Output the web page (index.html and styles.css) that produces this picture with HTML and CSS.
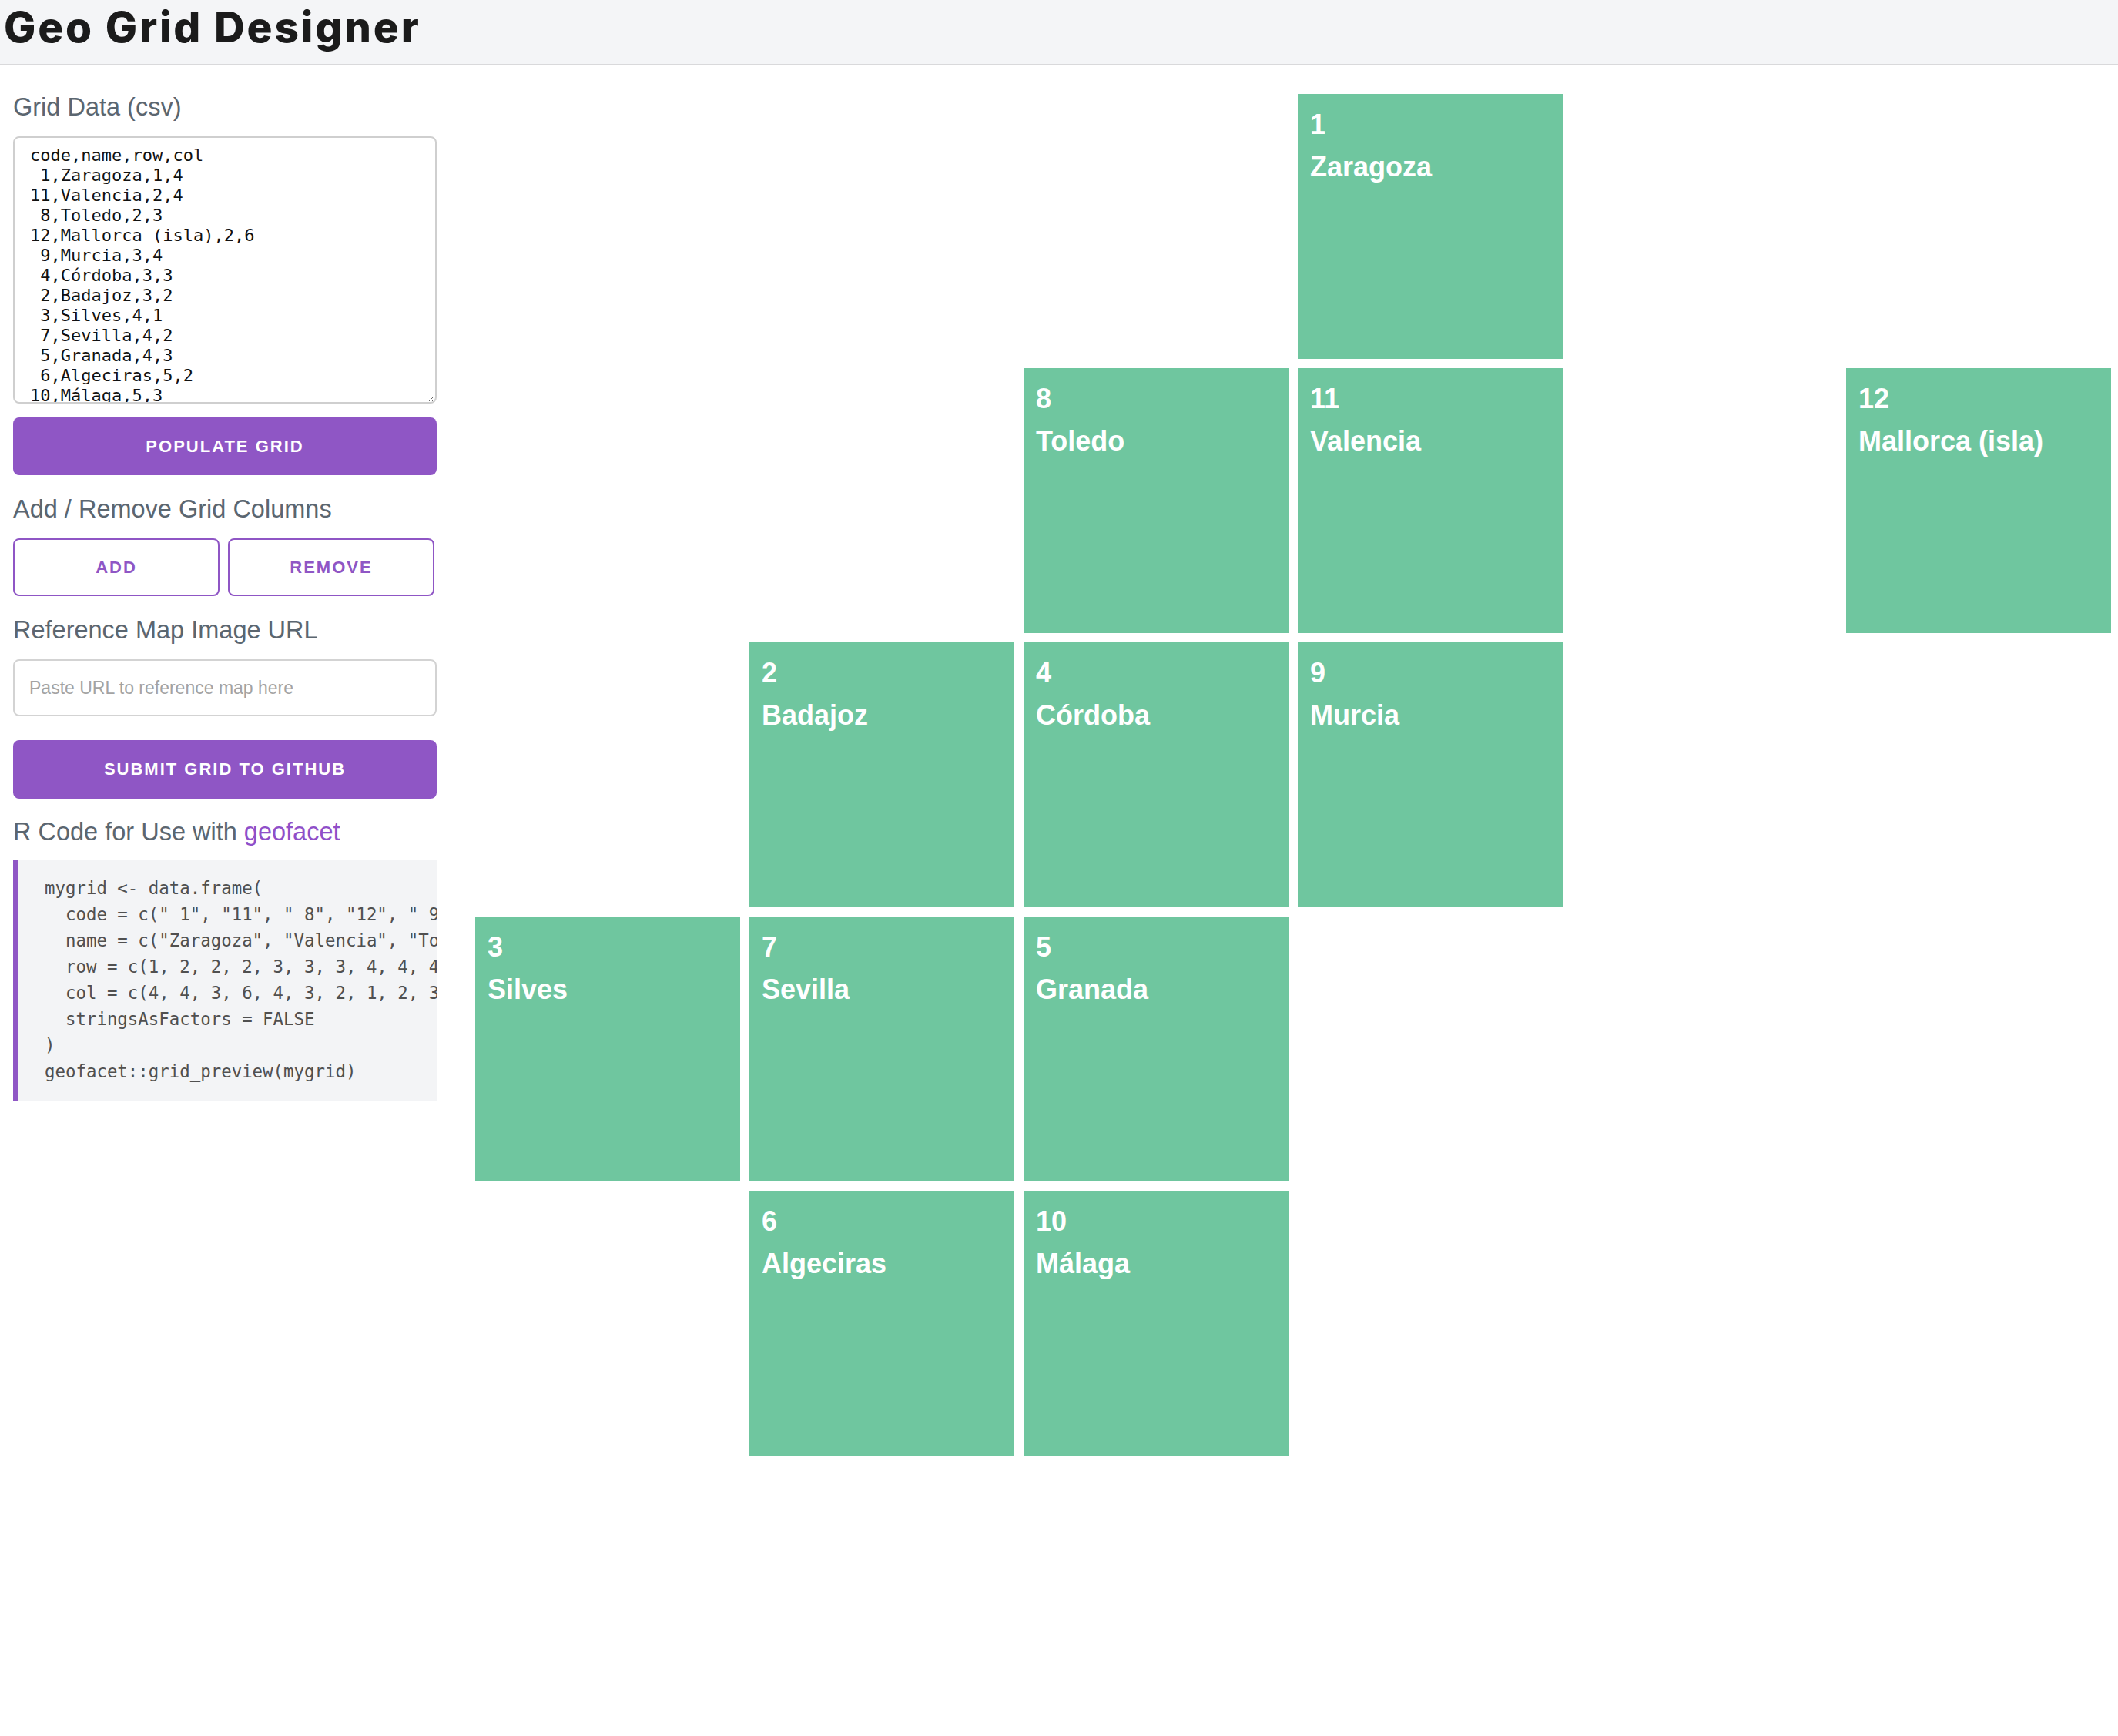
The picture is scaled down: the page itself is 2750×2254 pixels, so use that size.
FILE: index.html
```html
<!DOCTYPE html>
<html lang="en">
<head>
<meta charset="utf-8">
<title>Geo Grid Designer</title>
<link rel="stylesheet" href="styles.css">
</head>
<body>
<header class="topbar">
  <h1 class="title">Geo Grid Designer</h1>
</header>
<main class="layout">
  <aside class="sidebar">
    <h2 class="label label-first">Grid Data (csv)</h2>
    <textarea class="csv" spellcheck="false">code,name,row,col
 1,Zaragoza,1,4
11,Valencia,2,4
 8,Toledo,2,3
12,Mallorca (isla),2,6
 9,Murcia,3,4
 4,Córdoba,3,3
 2,Badajoz,3,2
 3,Silves,4,1
 7,Sevilla,4,2
 5,Granada,4,3
 6,Algeciras,5,2
10,Málaga,5,3</textarea>
    <button class="btn btn-solid btn-populate">Populate Grid</button>

    <h2 class="label">Add / Remove Grid Columns</h2>
    <div class="btn-pair">
      <button class="btn btn-outline">Add</button>
      <button class="btn btn-outline">Remove</button>
    </div>

    <h2 class="label">Reference Map Image URL</h2>
    <input class="url" type="text" placeholder="Paste URL to reference map here">
    <button class="btn btn-solid btn-submit">Submit Grid to GitHub</button>

    <h2 class="label label-code">R Code for Use with <a class="link" href="#">geofacet</a></h2>
    <pre class="code">mygrid &lt;- data.frame(
  code = c(" 1", "11", " 8", "12", " 9", " 4", " 2", " 3", " 7", " 5", " 6", "10"),
  name = c("Zaragoza", "Valencia", "Toledo", "Mallorca (isla)", "Murcia", "Córdoba", "Badajoz", "Silves", "Sevilla", "Granada", "Algeciras", "Málaga"),
  row = c(1, 2, 2, 2, 3, 3, 3, 4, 4, 4, 5, 5),
  col = c(4, 4, 3, 6, 4, 3, 2, 1, 2, 3, 2, 3),
  stringsAsFactors = FALSE
)
geofacet::grid_preview(mygrid)</pre>
  </aside>

  <section class="grid">
    <div class="tile" style="grid-row: 1; grid-column: 4;"><div class="tile-code">1</div><div class="tile-name">Zaragoza</div></div>
    <div class="tile" style="grid-row: 2; grid-column: 4;"><div class="tile-code">11</div><div class="tile-name">Valencia</div></div>
    <div class="tile" style="grid-row: 2; grid-column: 3;"><div class="tile-code">8</div><div class="tile-name">Toledo</div></div>
    <div class="tile" style="grid-row: 2; grid-column: 6;"><div class="tile-code">12</div><div class="tile-name">Mallorca (isla)</div></div>
    <div class="tile" style="grid-row: 3; grid-column: 4;"><div class="tile-code">9</div><div class="tile-name">Murcia</div></div>
    <div class="tile" style="grid-row: 3; grid-column: 3;"><div class="tile-code">4</div><div class="tile-name">Córdoba</div></div>
    <div class="tile" style="grid-row: 3; grid-column: 2;"><div class="tile-code">2</div><div class="tile-name">Badajoz</div></div>
    <div class="tile" style="grid-row: 4; grid-column: 1;"><div class="tile-code">3</div><div class="tile-name">Silves</div></div>
    <div class="tile" style="grid-row: 4; grid-column: 2;"><div class="tile-code">7</div><div class="tile-name">Sevilla</div></div>
    <div class="tile" style="grid-row: 4; grid-column: 3;"><div class="tile-code">5</div><div class="tile-name">Granada</div></div>
    <div class="tile" style="grid-row: 5; grid-column: 2;"><div class="tile-code">6</div><div class="tile-name">Algeciras</div></div>
    <div class="tile" style="grid-row: 5; grid-column: 3;"><div class="tile-code">10</div><div class="tile-name">Málaga</div></div>
  </section>
</main>
</body>
</html>
```

FILE: styles.css
```css
* {
  box-sizing: border-box;
}

html, body {
  margin: 0;
  padding: 0;
  background: #ffffff;
}

body {
  font-family: "Liberation Sans", Arial, sans-serif;
  color: #1b1b1b;
}

/* ---------- header ---------- */
.topbar {
  height: 85px;
  background: #f4f5f7;
  border-bottom: 2px solid #d9d9db;
  padding: 0 0 0 5px;
}

.title {
  margin: 0;
  font-family: Inter, "Noto Sans", sans-serif;
  font-weight: 800;
  font-size: 55px;
  line-height: 70px;
  letter-spacing: 2.8px;
  color: #1b1b1b;
}

/* ---------- layout ---------- */
.layout {
  display: flex;
  align-items: flex-start;
}

.sidebar {
  width: 550px;
  margin-left: 17px;
  display: flex;
  flex-direction: column;
}

.label {
  margin: 24px 0 18px;
  font-family: "Liberation Sans", Arial, sans-serif;
  font-weight: 400;
  font-size: 32.5px;
  line-height: 40px;
  color: #5b6670;
}

.label-first {
  margin-top: 34px;
  margin-bottom: 18px;
}

.label-code {
  margin-top: 23px;
  margin-bottom: 17px;
}

.link {
  color: #8f4fc9;
  text-decoration: none;
}

/* ---------- csv textarea ---------- */
.csv {
  display: block;
  width: 550px;
  height: 347px;
  margin: 0;
  padding: 10px 20px 0;
  border: 2px solid #cfcfcf;
  border-radius: 8px;
  font-family: "DejaVu Sans Mono", "Liberation Mono", monospace;
  font-size: 22px;
  line-height: 26px;
  color: #111111;
  background: #ffffff;
  overflow: hidden;
  resize: vertical;
  white-space: pre;
}

/* ---------- buttons ---------- */
.btn {
  display: block;
  height: 75px;
  margin: 0;
  border-radius: 8px;
  font-family: "Liberation Sans", Arial, sans-serif;
  font-weight: 700;
  font-size: 22px;
  letter-spacing: 2px;
  text-transform: uppercase;
  cursor: pointer;
}

.btn-solid {
  width: 550px;
  border: none;
  background: #8f56c5;
  color: #ffffff;
}

.btn-populate {
  margin-top: 18px;
}

.btn-submit {
  margin-top: 31px;
  height: 76px;
}

.btn-pair {
  display: grid;
  grid-template-columns: 268px 268px;
  column-gap: 11px;
}

.btn-outline {
  width: 268px;
  height: 75px;
  background: #ffffff;
  border: 2px solid #8f56c5;
  color: #8f56c5;
}

/* ---------- url input ---------- */
.url {
  display: block;
  width: 550px;
  height: 74px;
  margin: 0;
  padding: 0 19px;
  border: 2px solid #d3d3d3;
  border-radius: 8px;
  font-family: "Liberation Sans", Arial, sans-serif;
  font-size: 23px;
  color: #333333;
  background: #ffffff;
}

.url::placeholder {
  color: #a3a3a3;
}

/* ---------- code block ---------- */
.code {
  margin: 0;
  width: 551px;
  height: 312px;
  padding: 19px 0 22px 35px;
  border-left: 6px solid #8f56c5;
  background: #f3f4f6;
  font-family: "DejaVu Sans Mono", "Liberation Mono", monospace;
  font-size: 22.4px;
  line-height: 34px;
  color: #505050;
  white-space: pre;
  overflow: hidden;
}

/* ---------- grid ---------- */
.grid {
  display: grid;
  grid-template-columns: repeat(6, 344px);
  grid-template-rows: repeat(5, 344px);
  gap: 12px;
  margin-left: 50px;
  margin-top: 37px;
}

.tile {
  background: #6fc69f;
  color: #ffffff;
  padding: 12px 16px;
  font-family: "Liberation Sans", Arial, sans-serif;
  font-weight: 700;
  font-size: 36px;
  line-height: 55px;
}
```
